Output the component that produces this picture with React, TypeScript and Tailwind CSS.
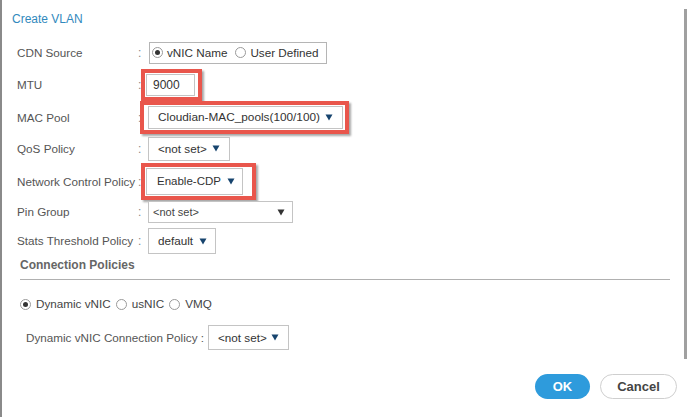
import React from 'react';

const FONT = { fontFamily: '"Liberation Sans", Arial, sans-serif' };

function Radio({ checked }: { checked?: boolean }) {
  return (
    <span className="inline-flex items-center justify-center w-[11px] h-[11px] rounded-full border border-[#9a9a9a] bg-white shrink-0">
      {checked && <span className="block w-[5px] h-[5px] rounded-full bg-[#333]" />}
    </span>
  );
}

function Arrow({ dark }: { dark?: boolean }) {
  return (
    <svg width="8" height="7" viewBox="0 0 8 7" className="shrink-0">
      <path d="M0.5 0.5 L7.5 0.5 L4 6.5 Z" fill={dark ? '#333' : '#17446e'} />
    </svg>
  );
}

function Select({
  value,
  width,
  height = 23,
  small,
  darkArrow,
  padLeft = 9,
  arrowRight = 10,
  textSize = 'text-[11.7px]',
}: {
  value: string;
  width: number;
  height?: number;
  small?: boolean;
  darkArrow?: boolean;
  padLeft?: number;
  arrowRight?: number;
  textSize?: string;
}) {
  return (
    <div
      className="flex items-center border border-[#c4c4c4] bg-white shrink-0"
      style={{ width, height, paddingLeft: padLeft, paddingRight: arrowRight }}
    >
      <span className={small ? 'text-[11px] text-[#444] whitespace-nowrap' : `${textSize} text-[#333] whitespace-nowrap`}>{value}</span>
      <span className="ml-auto pl-[4px] flex items-center">
        <Arrow dark={darkArrow} />
      </span>
    </div>
  );
}

function Row({ label, h, children }: { label: string; h: number; children: React.ReactNode }) {
  return (
    <div className="flex items-center pl-[15px]" style={{ height: h }}>
      <span className="w-[121px] text-[11.7px] text-[#555] whitespace-nowrap">{label}</span>
      <span className="w-[10px] text-[12px] text-[#888]">:</span>
      {children}
    </div>
  );
}

export default function App() {
  return (
    <div style={FONT} className="relative w-[700px] h-[417px] bg-white border-l-2 border-[#8a8a8a] overflow-hidden">
      {/* scrollbar */}
      <div className="absolute left-[682px] top-[9px] w-[3px] h-[350px] bg-[#a0a0a0]" />

      <div className="flex flex-col">
        <div className="h-[36px] pt-[12px] pl-[10px] text-[12px] leading-[14px] text-[#3189bd]">Create VLAN</div>

        <Row label="CDN Source" h={33}>
          <div className="ml-[1px] flex items-center gap-[4px] h-[22px] w-[178px] border border-[#b5b5b5] pl-[2px] text-[11.7px] text-[#333]">
            <Radio checked />
            <span className="mr-[4px]">vNIC Name</span>
            <Radio />
            <span>User Defined</span>
          </div>
        </Row>

        <Row label="MTU" h={32}>
          <div className="ml-[-7px] border-4 border-[#e9564c] pl-[1px] pr-[3px] py-[1px] shadow-[2px_2px_2px_rgba(0,0,0,0.35)]">
            <div className="w-[49px] h-[22px] border border-[#c4c4c4] flex items-center pl-[6px] text-[12px] text-[#333]">9000</div>
          </div>
        </Row>

        <Row label="MAC Pool" h={33}>
          <div className="ml-[-8px] border-4 border-[#e9564c] pl-[4px] pr-[2px] py-[1px] shadow-[2px_2px_2px_rgba(0,0,0,0.35)]">
            <Select value="Cloudian-MAC_pools(100/100)" width={195} height={23} arrowRight={9} textSize="text-[11.8px]" />
          </div>
        </Row>

        <Row label="QoS Policy" h={29}>
          <Select value="<not set>" width={82} height={24} arrowRight={9} />
        </Row>

        <Row label="Network Control Policy" h={37}>
          <div className="ml-[-7px] border-4 border-[#e9564c] pl-[1px] pr-[9px] py-[1px] shadow-[2px_2px_2px_rgba(0,0,0,0.35)]">
            <Select value="Enable-CDP" width={97} height={27} padLeft={10} arrowRight={7} textSize="text-[11.5px]" />
          </div>
        </Row>

        <Row label="Pin Group" h={24}>
          <Select value="<not set>" width={145} height={22} small darkArrow padLeft={4} arrowRight={7} />
        </Row>

        <Row label="Stats Threshold Policy" h={34}>
          <Select value="default" width={68} height={26} arrowRight={8} />
        </Row>

        <div className="h-[14px] pl-[18px] flex items-center text-[12px] font-bold text-[#666]">Connection Policies</div>
        <div className="mt-[7px] ml-[18px] w-[650px] border-t-[1.5px] border-[#b0b0b0]" />

        <div className="mt-[16px] h-[16px] pl-[18px] flex items-center gap-[5px] text-[11.7px] text-[#444]">
          <Radio checked />
          <span>Dynamic vNIC</span>
          <Radio />
          <span>usNIC</span>
          <Radio />
          <span>VMQ</span>
        </div>

        <div className="mt-[13px] h-[25px] pl-[24px] flex items-center">
          <span className="w-[182px] text-[11.7px] text-[#555] whitespace-nowrap">Dynamic vNIC Connection Policy :</span>
          <Select value="<not set>" width={81} height={25} arrowRight={10} />
        </div>

        <div className="mt-[24px] flex justify-end gap-[10px] pr-[23px]">
          <button className="w-[55px] h-[25px] rounded-full bg-[#2e9bdc] text-white text-[13px] font-bold">OK</button>
          <button className="w-[77px] h-[25px] rounded-full bg-white border border-[#cfcfcf] text-[#444] text-[13px] font-bold">Cancel</button>
        </div>
      </div>
    </div>
  );
}
